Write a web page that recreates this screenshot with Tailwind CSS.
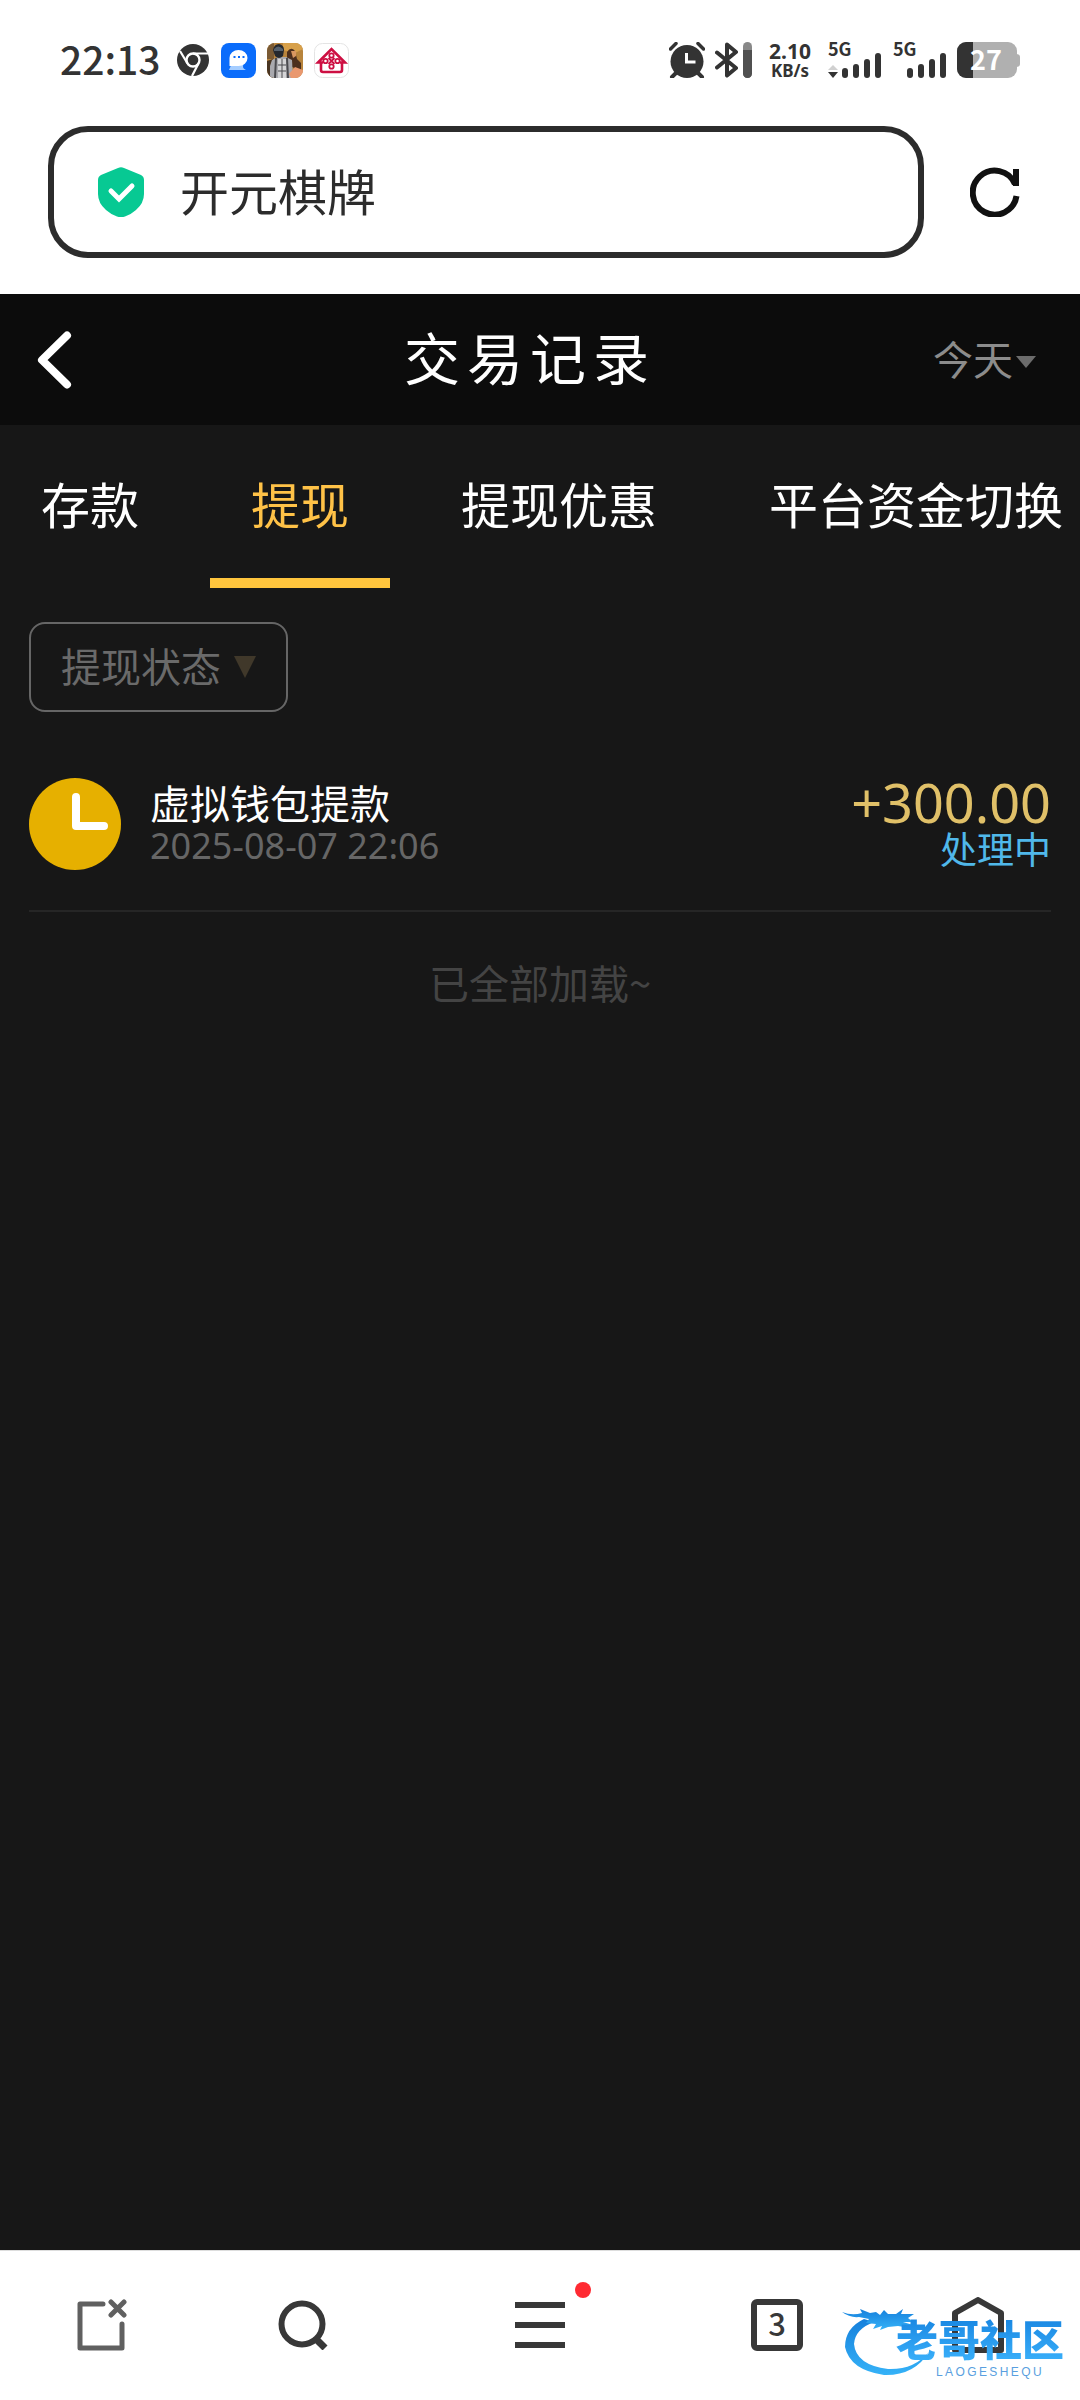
<!DOCTYPE html>
<html lang="zh-CN">
  <head>
    <meta charset="UTF-8" />
    <meta name="viewport" content="width=device-width, initial-scale=1.0" />
    <script src="https://cdn.jsdelivr.net/npm/@tailwindcss/browser@4"></script>
    <title>交易记录</title>
  </head>
  <body class="min-h-screen flex flex-col bg-[#171717] font-['Noto_Sans_CJK_SC',sans-serif]">
    <!-- Status bar -->
    <div class="h-[126px] pt-[6px] pl-[60px] pr-[60px] flex items-start justify-between bg-white text-[#333]">
      <div class="h-[108px] flex items-center gap-3">
        <span class="pb-1 pr-1 text-[39px] font-medium leading-none">22:13</span>
        <svg class="w-8 h-8" viewBox="0 0 32 32">
          <circle cx="16" cy="16" r="16" fill="#333" />
          <circle cx="16" cy="16" r="6.5" fill="none" stroke="#fff" stroke-width="2.4" />
          <path d="M16 9.5H31M10.4 19.2L3 7M21.6 19.3L15 32" stroke="#fff" stroke-width="2.2" />
        </svg>
        <div class="flex items-center gap-[11px]">
          <svg class="w-[35px] h-[35px]" viewBox="0 0 35 35">
            <rect width="35" height="35" rx="8" fill="#0a6cfb" />
            <path d="M8 27L11 20H23Q20 25 25 27Z" fill="#a5cdff" />
            <path d="M17.500 7a9 8 0 0 1 0 16H8.500V15a9 8 0 0 1 9-8z" fill="#fff" />
            <path d="M12.500 14h2M17 14h2M21.500 14h2" stroke="#0a6cfb" stroke-width="2" />
          </svg>
          <svg class="w-9 h-[35px]" viewBox="0 0 36 35">
            <defs>
              <clipPath id="gameClip"><rect width="36" height="35" rx="8" /></clipPath>
            </defs>
            <g clip-path="url(#gameClip)">
              <rect width="36" height="35" fill="#b8843c" />
              <path d="M0 0h7v16H0z" fill="#7a5a34" />
              <path d="M16 0h20v6l-8 4-12-3z" fill="#d7a04a" />
              <path d="M0 18l6-2v19H0z" fill="#493522" />
              <path d="M20 9q4-6 8-1l2 8 4 4v8l-9-4-5-9z" fill="#4c2f1d" />
              <path d="M24 8h5v5l-3 2z" fill="#d99760" />
              <path d="M5 17l6-3h8l6 3 1 18H3V23z" fill="#a9a9ae" />
              <path d="M9 15l-1 20M20 15l1 20" stroke="#4a4a4e" stroke-width="2" />
              <path d="M11 16h8v19h-8z" fill="#d4d4d6" />
              <path d="M15 16v19M11 22h8M11 28h8" stroke="#4a4a4e" />
              <path d="M6 7q1-6 6-6 5 1 5 6l-1 6q-4 4-8 0z" fill="#24282e" />
              <path d="M7 6q4-5 9 0v2H7z" fill="#56616d" />
              <path d="M22 31l6-7 8 3v8H24z" fill="#e9986f" />
            </g>
          </svg>
          <svg class="w-[35px] h-[35px]" viewBox="0 0 35 35" fill="none" stroke="#cd0f42" stroke-width="2.600">
            <rect x="0.500" y="0.500" width="34" height="34" rx="8" fill="#fff" stroke="#e4e4e4" stroke-width="1" />
            <path d="M9 19.500H4L17.500 6L31 19.500H26" />
            <path d="M7 20v7q0 2 2 2h17q2 0 2-2v-7" />
            <circle cx="17.500" cy="12.500" r="2.200" stroke-width="1.800" />
            <circle cx="11.500" cy="18" r="2.200" stroke-width="1.800" />
            <circle cx="23.500" cy="18" r="2.200" stroke-width="1.800" />
            <circle cx="17.500" cy="23.500" r="2.200" stroke-width="1.800" />
            <path d="M14.500 21L20.500 15M14.500 15L20.500 21" stroke-width="1.800" />
          </svg>
        </div>
      </div>

      <div class="h-[108px] flex items-center">
        <svg class="w-9 h-9" viewBox="0 0 36 36">
          <circle cx="18" cy="19.500" r="16.500" fill="#333" />
          <path d="M8 30l-5 5M28 30l5 5" stroke="#333" stroke-width="4" stroke-linecap="round" />
          <path d="M1.500 7L7 1.500M34.500 7L29 1.500" stroke="#333" stroke-width="3.500" stroke-linecap="round" />
          <path d="M17.500 11v9h9" fill="none" stroke="#fff" stroke-width="3" />
        </svg>
        <svg class="ml-[10px] w-[37px] h-9" viewBox="0 0 37 36">
          <path d="M2 10.500L21 26 12 33.500V2.500L21 10 2 25.500" fill="none" stroke="#333" stroke-width="4" stroke-linejoin="round" stroke-linecap="round" />
          <rect x="28" width="9" height="36" rx="4.500" fill="#888" />
          <path d="M28 8h9v23.500a4.500 4.500 0 0 1-9 0z" fill="#505050" />
        </svg>
        <div class="ml-4 w-11 text-center font-['Noto_Sans',sans-serif] font-bold whitespace-nowrap">
          <div class="text-[21px] leading-[22px]">2.10</div>
          <div class="text-[17px] leading-[18px]">KB/s</div>
        </div>
        <svg class="ml-4 w-[54px] h-9 overflow-visible" viewBox="0 0 54 36" fill="#333">
          <text x="0" y="14" font-size="18" font-weight="700">5G</text>
          <path d="M0 28l5-5 5 5z" fill="#d0d0d0" />
          <path d="M0 30h10l-5 6z" />
          <rect x="14" y="26" width="6" height="10" rx="3" />
          <rect x="25" y="22" width="6" height="14" rx="3" />
          <rect x="36" y="17" width="6" height="19" rx="3" />
          <rect x="47" y="11" width="6" height="25" rx="3" />
        </svg>
        <svg class="ml-[11px] w-[54px] h-9 overflow-visible" viewBox="0 0 54 36" fill="#333">
          <text x="0" y="14" font-size="18" font-weight="700">5G</text>
          <rect x="14" y="26" width="6" height="10" rx="3" />
          <rect x="25" y="22" width="6" height="14" rx="3" />
          <rect x="36" y="17" width="6" height="19" rx="3" />
          <rect x="47" y="11" width="6" height="25" rx="3" />
        </svg>
        <svg class="ml-[10px] w-[63px] h-9 overflow-visible" viewBox="0 0 63 36">
          <rect width="60" height="36" rx="9" fill="#b0b0b0" />
          <path d="M59 12q4 0 4 3v7q0 3-4 3z" fill="#b0b0b0" />
          <path d="M9 0h7v36H9a9 9 0 0 1-9-9V9a9 9 0 0 1 9-9z" fill="#333" />
          <text x="13" y="28" font-size="27" font-weight="700" fill="#fff">27</text>
        </svg>
      </div>
    </div>

    <!-- Address bar -->
    <div class="pb-9 pl-12 pr-[60px] flex items-center gap-[46px] bg-white">
      <label class="flex-1 h-[132px] pl-11 pr-11 flex items-center gap-9 border-6 border-[#2c2c2c] rounded-[40px]">
        <svg class="w-[46px] h-[50px] shrink-0" viewBox="0 0 46 50">
          <path d="M20 1q3-1.500 6 0l17 7q3 1.500 3 5v14q0 9-8 16-5 4.500-11 6.500-4 1.500-8 0-6-2-11-6.500-8-7-8-16V13q0-3.500 3-5z" fill="#07c993" />
          <path d="M13 24l8 8L34 19" fill="none" stroke="#fff" stroke-width="5" stroke-linecap="round" />
        </svg>
        <input type="text" aria-label="地址栏" value="开元棋牌" class="min-w-0 flex-1 pb-1 text-[49px] text-[#2c2c2c] outline-none" />
      </label>
      <button aria-label="刷新" class="shrink-0">
        <svg class="w-[50px] h-[50px]" viewBox="0 0 50 50" fill="none" stroke="#111" stroke-width="6">
          <path d="M46.500 29A22 22 0 1 1 45 17" />
          <path d="M46 2V19" />
        </svg>
      </button>
    </div>

    <!-- Page header -->
    <header class="h-[131px] pl-9 pr-11 grid grid-cols-[1fr_auto_1fr] items-center bg-[#0c0c0c]">
      <button aria-label="返回" class="justify-self-start">
        <svg class="w-9 h-[58px]" viewBox="0 0 36 58" fill="none" stroke="#fff" stroke-width="8" stroke-linecap="round" stroke-linejoin="round">
          <path d="M31 4.500L6 29L31 53.500" />
        </svg>
      </button>
      <h1 class="pb-2 pr-3 text-[56px] leading-none tracking-[7px] text-white">交易记录</h1>
      <div class="justify-self-end flex items-center">
        <select aria-label="日期" class="appearance-none w-[83px] pb-1 text-[40px] text-[#8c8c8c] outline-none">
          <option>今天</option>
        </select>
        <svg class="w-5 h-3 mt-1 pointer-events-none" viewBox="0 0 20 12"><path d="M0 0h20L10 12z" fill="#6c6c6c" /></svg>
      </div>
    </header>

    <nav class="flex gap-[30px] overflow-hidden whitespace-nowrap text-[49px] text-white">
      <a href="#" class="h-[163px] px-[41px] border-b-10 border-transparent leading-[156px]">存款</a>
      <a href="#" class="h-[163px] px-[41px] border-b-10 border-[#ffc53d] leading-[156px] text-[#ffc247]">提现</a>
      <a href="#" class="h-[163px] px-[41px] border-b-10 border-transparent leading-[156px]">提现优惠</a>
      <a href="#" class="h-[163px] pl-[41px] border-b-10 border-transparent leading-[156px]">平台资金切换</a>
    </nav>

    <main class="flex-1 px-[29px] pt-[34px]">
      <div class="relative w-[259px] flex items-center">
        <select aria-label="提现状态" class="appearance-none w-full h-[90px] pl-[30px] pb-1 border-2 border-[#666] rounded-2xl text-[40px] text-[#6a6a6a] outline-none">
          <option>提现状态</option>
        </select>
        <svg class="absolute right-8 w-[22px] h-[22px] pointer-events-none" viewBox="0 0 22 22"><path d="M0 0h22L11 22z" fill="#40382a" /></svg>
      </div>

      <!-- Records -->
      <ul>
        <li class="mt-[66px] pb-10 flex items-center border-b-2 border-[#262626]">
          <svg class="w-[92px] h-[92px]" viewBox="0 0 92 92">
            <circle cx="46" cy="46" r="46" fill="#e6b000" />
            <path d="M47 19V48H75" fill="none" stroke="#fff" stroke-width="8" stroke-linecap="round" stroke-linejoin="round" />
          </svg>
          <div class="ml-[29px] flex-1">
            <p class="text-[40px] leading-[44px] text-white">虚拟钱包提款</p>
            <p class="font-['Noto_Sans',sans-serif] text-[36px] leading-[44px] text-[#666]">2025-08-07 22:06</p>
          </div>
          <div class="text-right">
            <p class="font-['Noto_Sans',sans-serif] text-[54px] leading-[48px] text-[#e0c068]">+300.00</p>
            <p class="text-[37px] leading-[44px] text-[#50b8ea]">处理中</p>
          </div>
        </li>
      </ul>
      <p class="pt-10 text-center text-[40px] leading-[60px] text-[#444]">已全部加载~</p>
    </main>

    <!-- Browser toolbar -->
    <footer class="relative h-[150px] pb-0.5 grid grid-cols-[204fr_198fr_276fr_198fr_204fr] items-center justify-items-center border-t border-[#ddd] bg-white text-[#383838]">
      <button aria-label="新建标签页">
        <svg class="w-[50px] h-[52px]" viewBox="0 0 50 52" fill="none" stroke="#606060" stroke-width="5" stroke-linecap="round" stroke-linejoin="round">
          <path d="M26 5H3V49H45V25" />
          <path d="M34 3L47 16M47 3L34 16" />
        </svg>
      </button>
      <button aria-label="搜索">
        <svg class="w-[50px] h-[50px]" viewBox="0 0 50 50" fill="none" stroke="#383838" stroke-width="6">
          <circle cx="24" cy="24" r="20.500" />
          <path d="M38 39L47 48" stroke-width="7" />
        </svg>
      </button>
      <button aria-label="菜单" class="relative">
        <svg class="w-[50px] h-[46px]" viewBox="0 0 50 46" fill="#383838">
          <path d="M0 0h50v6H0zM0 20h50v6H0zM0 40h50v6H0z" />
        </svg>
        <span class="absolute -top-5 -right-[26px] w-4 h-4 rounded-full bg-[#ff2a32]"></span>
      </button>
      <button aria-label="标签页" class="w-[52px] h-[52px] pb-1 flex items-center justify-center border-6 border-[#383838] rounded-md text-[31px] font-medium leading-none">3</button>
      <button aria-label="主页">
        <svg class="w-[52px] h-14" viewBox="0 0 52 56" fill="none" stroke="#383838" stroke-width="6" stroke-linejoin="round">
          <path d="M3 53V16L26 3L49 16V53Z" />
        </svg>
      </button>

      <!-- Site watermark over the toolbar -->
      <div class="absolute right-4 bottom-5 w-[222px] h-[76px] pointer-events-none">
        <svg class="absolute left-0 top-0 w-[90px] h-[76px]" viewBox="0 0 90 76">
          <defs>
            <linearGradient id="dragon" x1="0" y1="0" x2="0" y2="1">
              <stop offset="0" stop-color="#1680dc" />
              <stop offset="1" stop-color="#35b2f8" />
            </linearGradient>
          </defs>
          <path d="M22 15Q3 24 3 43Q8 66 42 71Q72 72 87 48Q72 66 46 65Q14 61 12 40Q13 25 32 18Z" fill="url(#dragon)" />
          <path d="M0 8Q10 12 20 9L18 5L28 9L34 8L38 11L42 6L46 10L54 10L61 5L59 10L72 10L66 14L71 18L61 18L71 21L68 24L56 22L46 23L38 26L40 22L31 25L34 20L24 19L27 15L17 13Q8 14 0 8Z" fill="url(#dragon)" />
        </svg>
        <span class="absolute right-0 top-[10px] bg-linear-to-b from-[#1583e0] to-[#3ab0fa] bg-clip-text text-[42px] leading-[48px] font-black whitespace-nowrap text-transparent">老哥社区</span>
        <span class="absolute right-5 top-[62px] font-['Liberation_Sans',sans-serif] text-xs leading-3 tracking-[0.2em] text-[#5a9fe0]">LAOGESHEQU</span>
      </div>
    </footer>
  </body>
</html>
